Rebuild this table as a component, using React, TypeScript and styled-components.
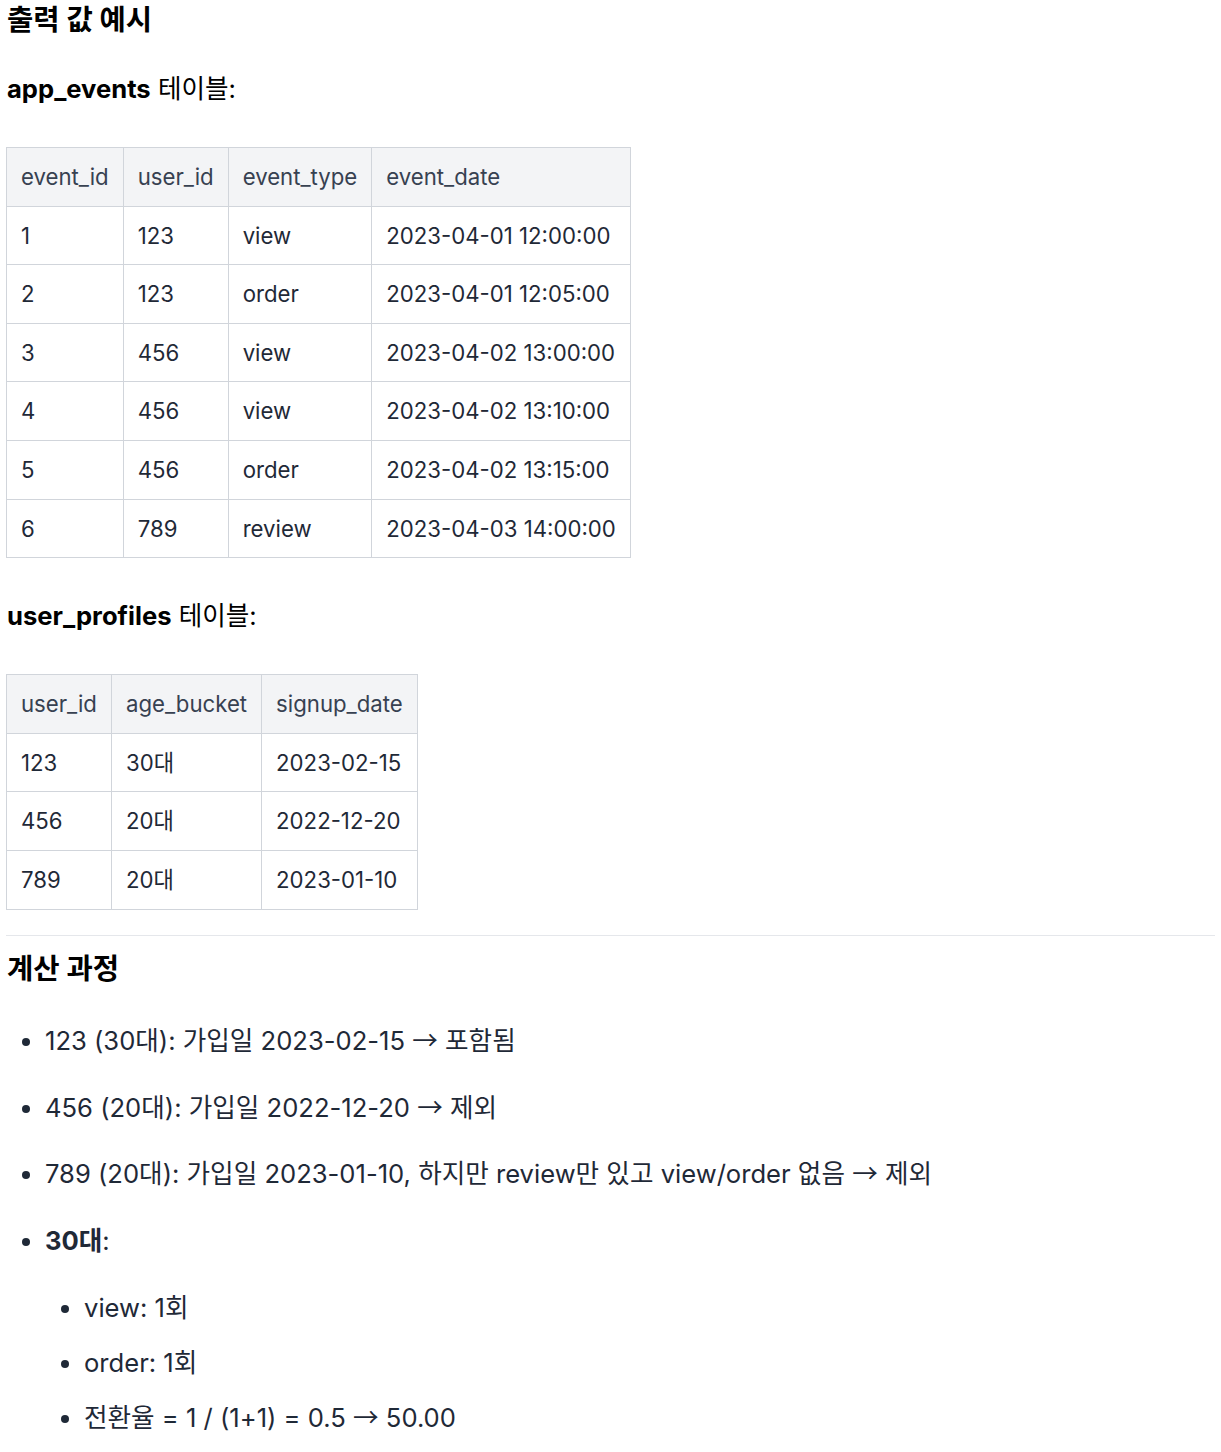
import styled, { createGlobalStyle } from "styled-components"

const GlobalStyle = createGlobalStyle`
    html, body {
        margin: 0;
        padding: 0;
        background: #ffffff;
    }
    body {
        font-family: Inter, "Noto Sans CJK KR", sans-serif;
        color: #1f2937;
    }
`

const events = [
    ["1", "123", "view", "2023-04-01 12:00:00"],
    ["2", "123", "order", "2023-04-01 12:05:00"],
    ["3", "456", "view", "2023-04-02 13:00:00"],
    ["4", "456", "view", "2023-04-02 13:10:00"],
    ["5", "456", "order", "2023-04-02 13:15:00"],
    ["6", "789", "review", "2023-04-03 14:00:00"],
]

const profiles = [
    ["123", "30대", "2023-02-15"],
    ["456", "20대", "2022-12-20"],
    ["789", "20대", "2023-01-10"],
]

function DataTable({ head, rows }: { head: string[]; rows: string[][] }) {
    return (
        <Table>
            <thead>
                <tr>
                    {head.map((h) => (
                        <th key={h}>{h}</th>
                    ))}
                </tr>
            </thead>
            <tbody>
                {rows.map((r, i) => (
                    <tr key={i}>
                        {r.map((c, j) => (
                            <td key={j}>{c}</td>
                        ))}
                    </tr>
                ))}
            </tbody>
        </Table>
    )
}

const Arrow = () => <ArrowGlyph>→</ArrowGlyph>

export default function App() {
    return (
        <>
            <GlobalStyle />
            <Wrapper>
                <Heading>출력 값 예시</Heading>
                <Para>
                    <strong>app_events</strong> 테이블:
                </Para>
                <DataTable head={["event_id", "user_id", "event_type", "event_date"]} rows={events} />
                <Para>
                    <strong>user_profiles</strong> 테이블:
                </Para>
                <DataTable head={["user_id", "age_bucket", "signup_date"]} rows={profiles} />
                <Rule />
                <Heading>계산 과정</Heading>
                <List>
                    <li>
                        123 (30대): 가입일 2023-02-15 <Arrow /> 포함됨
                    </li>
                    <li>
                        456 (20대): 가입일 2022-12-20 <Arrow /> 제외
                    </li>
                    <li>
                        789 (20대): 가입일 2023-01-10, 하지만 review만 있고 view/order 없음 <Arrow /> 제외
                    </li>
                    <li>
                        <strong>30대</strong>:
                        <SubList>
                            <li>view: 1회</li>
                            <li>order: 1회</li>
                            <li>
                                전환율 = 1 / (1+1) = 0.5 <Arrow /> 50.00
                            </li>
                        </SubList>
                    </li>
                </List>
            </Wrapper>
        </>
    )
}

const Wrapper = styled.main`
    padding: 0 6px 12px 6px;
    font-size: 25.6px;
`

const Heading = styled.h3`
    margin: 0;
    font-size: 28.6px;
    line-height: 40px;
    font-weight: 700;
    color: #000;
    padding-left: 1px;
`

const Para = styled.p`
    margin: 30px 0 38.6px;
    line-height: 38.4px;
    color: #000;
    padding-left: 1px;

    strong {
        font-weight: 700;
    }
`

const Table = styled.table`
    border-collapse: collapse;
    font-size: 22.2px;
    color: #1f2937;
    margin-bottom: 25.5px;

    & + p {
        margin-top: 39px;
    }

    th,
    td {
        border: 1px solid #d1d5db;
        padding: 12px 14px;
        line-height: 33.6px;
        text-align: left;
        font-weight: 400;
        white-space: nowrap;
    }

    th {
        background: #f3f4f6;
        color: #374151;
    }
`

const Rule = styled.hr`
    border: none;
    border-top: 1px solid #e5e7eb;
    margin: 0 0 13px;
`

const List = styled.ul`
    margin: 32.8px 0 0;
    padding-left: 39px;
    line-height: 38.4px;
    color: #1f2937;

    > li {
        margin-bottom: 28.3px;
    }

    strong {
        font-weight: 700;
    }
`

const SubList = styled.ul`
    margin: 28.3px 0 0;
    padding-left: 39px;
    list-style: disc;

    > li {
        margin-bottom: 16.6px;
    }
`

const ArrowGlyph = styled.span`
    font-family: "Noto Sans CJK KR", sans-serif;
    line-height: 1;
`
